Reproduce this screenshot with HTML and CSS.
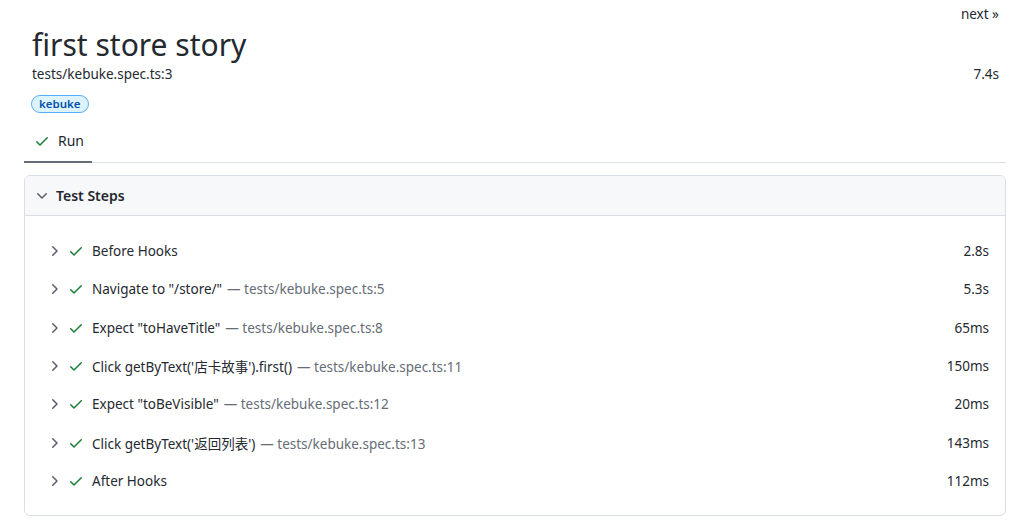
FILE: index.html
```html
<!DOCTYPE html>
<html lang="en">
<head>
    <meta charset="UTF-8">
    <title>Playwright Test Report</title>
    <link rel="stylesheet" href="styles.css">
</head>
<body>
    <div class="test-case">
        <div class="nav-row">
            <a class="nav-link" href="#">next »</a>
        </div>

        <h1 class="test-title">first store story</h1>
        <div class="location-row">
            <span>tests/kebuke.spec.ts:3</span>
            <span class="duration">7.4s</span>
        </div>

        <div class="labels">
            <span class="label">kebuke</span>
        </div>

        <div class="tabs">
            <div class="tab selected">
                <svg class="icon check" viewBox="0 0 16 16"><path d="M13.78 4.22a.75.75 0 0 1 0 1.06l-7.25 7.25a.75.75 0 0 1-1.06 0L2.22 9.28a.751.751 0 0 1 1.06-1.06L6 10.94l6.72-6.72a.75.75 0 0 1 1.06 0Z"/></svg>
                <span>Run</span>
            </div>
        </div>

        <div class="chip">
            <div class="chip-header">
                <svg class="icon chevron" viewBox="0 0 16 16"><path d="M12.78 5.22a.749.749 0 0 1 0 1.060l-4.25 4.25a.749.749 0 0 1-1.06 0L3.22 6.28a.749.749 0 1 1 1.06-1.06L8 8.939l3.72-3.719a.749.749 0 0 1 1.06 0Z"/></svg>
                <span>Test Steps</span>
            </div>
            <div class="chip-body">
                <div class="step">
                    <svg class="icon chevron" viewBox="0 0 16 16"><path d="M6.22 3.22a.75.75 0 0 1 1.06 0l4.25 4.25a.75.75 0 0 1 0 1.06l-4.25 4.25a.751.751 0 0 1-1.042-.018.751.751 0 0 1-.018-1.042L9.94 8 6.220 4.28a.75.75 0 0 1 0-1.06Z"/></svg>
                    <svg class="icon check" viewBox="0 0 16 16"><path d="M13.78 4.22a.75.75 0 0 1 0 1.06l-7.25 7.25a.75.75 0 0 1-1.06 0L2.22 9.28a.751.751 0 0 1 1.06-1.06L6 10.94l6.72-6.72a.75.75 0 0 1 1.06 0Z"/></svg>
                    <span class="step-title">Before Hooks</span>
                    <span class="step-duration">2.8s</span>
                </div>
                <div class="step">
                    <svg class="icon chevron" viewBox="0 0 16 16"><path d="M6.22 3.22a.75.75 0 0 1 1.06 0l4.25 4.25a.75.75 0 0 1 0 1.06l-4.25 4.25a.751.751 0 0 1-1.042-.018.751.751 0 0 1-.018-1.042L9.94 8 6.220 4.28a.75.75 0 0 1 0-1.06Z"/></svg>
                    <svg class="icon check" viewBox="0 0 16 16"><path d="M13.78 4.22a.75.75 0 0 1 0 1.06l-7.25 7.25a.75.75 0 0 1-1.06 0L2.22 9.28a.751.751 0 0 1 1.06-1.06L6 10.94l6.72-6.72a.75.75 0 0 1 1.06 0Z"/></svg>
                    <span class="step-title">Navigate to "/store/"<span class="step-location">— tests/kebuke.spec.ts:5</span></span>
                    <span class="step-duration">5.3s</span>
                </div>
                <div class="step">
                    <svg class="icon chevron" viewBox="0 0 16 16"><path d="M6.22 3.22a.75.75 0 0 1 1.06 0l4.25 4.25a.75.75 0 0 1 0 1.06l-4.25 4.25a.751.751 0 0 1-1.042-.018.751.751 0 0 1-.018-1.042L9.94 8 6.220 4.28a.75.75 0 0 1 0-1.06Z"/></svg>
                    <svg class="icon check" viewBox="0 0 16 16"><path d="M13.78 4.22a.75.75 0 0 1 0 1.06l-7.25 7.25a.75.75 0 0 1-1.06 0L2.22 9.28a.751.751 0 0 1 1.06-1.06L6 10.94l6.72-6.72a.75.75 0 0 1 1.06 0Z"/></svg>
                    <span class="step-title">Expect "toHaveTitle"<span class="step-location">— tests/kebuke.spec.ts:8</span></span>
                    <span class="step-duration">65ms</span>
                </div>
                <div class="step">
                    <svg class="icon chevron" viewBox="0 0 16 16"><path d="M6.22 3.22a.75.75 0 0 1 1.06 0l4.25 4.25a.75.75 0 0 1 0 1.06l-4.25 4.25a.751.751 0 0 1-1.042-.018.751.751 0 0 1-.018-1.042L9.94 8 6.220 4.28a.75.75 0 0 1 0-1.06Z"/></svg>
                    <svg class="icon check" viewBox="0 0 16 16"><path d="M13.78 4.22a.75.75 0 0 1 0 1.06l-7.25 7.25a.75.75 0 0 1-1.06 0L2.22 9.28a.751.751 0 0 1 1.06-1.06L6 10.94l6.72-6.72a.75.75 0 0 1 1.06 0Z"/></svg>
                    <span class="step-title">Click getByText('店卡故事').first()<span class="step-location">— tests/kebuke.spec.ts:11</span></span>
                    <span class="step-duration">150ms</span>
                </div>
                <div class="step">
                    <svg class="icon chevron" viewBox="0 0 16 16"><path d="M6.22 3.22a.75.75 0 0 1 1.06 0l4.25 4.25a.75.75 0 0 1 0 1.06l-4.25 4.25a.751.751 0 0 1-1.042-.018.751.751 0 0 1-.018-1.042L9.94 8 6.220 4.28a.75.75 0 0 1 0-1.06Z"/></svg>
                    <svg class="icon check" viewBox="0 0 16 16"><path d="M13.78 4.22a.75.75 0 0 1 0 1.06l-7.25 7.25a.75.75 0 0 1-1.06 0L2.22 9.28a.751.751 0 0 1 1.06-1.06L6 10.94l6.72-6.72a.75.75 0 0 1 1.06 0Z"/></svg>
                    <span class="step-title">Expect "toBeVisible"<span class="step-location">— tests/kebuke.spec.ts:12</span></span>
                    <span class="step-duration">20ms</span>
                </div>
                <div class="step">
                    <svg class="icon chevron" viewBox="0 0 16 16"><path d="M6.22 3.22a.75.75 0 0 1 1.06 0l4.25 4.25a.75.75 0 0 1 0 1.06l-4.25 4.25a.751.751 0 0 1-1.042-.018.751.751 0 0 1-.018-1.042L9.94 8 6.220 4.28a.75.75 0 0 1 0-1.06Z"/></svg>
                    <svg class="icon check" viewBox="0 0 16 16"><path d="M13.78 4.22a.75.75 0 0 1 0 1.06l-7.25 7.25a.75.75 0 0 1-1.06 0L2.22 9.28a.751.751 0 0 1 1.06-1.06L6 10.94l6.72-6.72a.75.75 0 0 1 1.06 0Z"/></svg>
                    <span class="step-title">Click getByText('返回列表')<span class="step-location">— tests/kebuke.spec.ts:13</span></span>
                    <span class="step-duration">143ms</span>
                </div>
                <div class="step">
                    <svg class="icon chevron" viewBox="0 0 16 16"><path d="M6.22 3.22a.75.75 0 0 1 1.06 0l4.25 4.25a.75.75 0 0 1 0 1.06l-4.25 4.25a.751.751 0 0 1-1.042-.018.751.751 0 0 1-.018-1.042L9.94 8 6.220 4.28a.75.75 0 0 1 0-1.06Z"/></svg>
                    <svg class="icon check" viewBox="0 0 16 16"><path d="M13.78 4.22a.75.75 0 0 1 0 1.06l-7.25 7.25a.75.75 0 0 1-1.06 0L2.22 9.28a.751.751 0 0 1 1.06-1.06L6 10.94l6.72-6.72a.75.75 0 0 1 1.06 0Z"/></svg>
                    <span class="step-title">After Hooks</span>
                    <span class="step-duration">112ms</span>
                </div>
            </div>
        </div>
    </div>
</body>
</html>
```

FILE: styles.css
```css
body {
    margin: 0;
    font-family: "Noto Sans", "Noto Sans CJK SC", sans-serif;
    font-size: 13.5px;
    color: #24292f;
    background: white;
}

.test-case {
    margin: 0 18px 0 24px;
}

.nav-row {
    display: flex;
    justify-content: flex-end;
    padding: 5px 7px 0 0;
    height: 18px;
}

.nav-link {
    color: #24292f;
    text-decoration: none;
    line-height: 18px;
}

.test-title {
    margin: 3px 0 0 8px;
    font-size: 30px;
    font-weight: 400;
    line-height: 38px;
}

.location-row {
    display: flex;
    justify-content: space-between;
    padding: 0 7px 0 8px;
    line-height: 20px;
}

.labels {
    display: flex;
    padding: 11px 0 0 7px;
}

.label {
    display: inline-block;
    padding: 0 7px;
    line-height: 16px;
    font-size: 11.5px;
    font-weight: 600;
    color: #0550ae;
    background: #ddf4ff;
    border: 1px solid #54aeff;
    border-radius: 9px;
}

.tabs {
    display: flex;
    margin-top: 11px;
    border-bottom: 1px solid #d8dee4;
}

.tab {
    display: flex;
    align-items: center;
    gap: 8px;
    padding: 0 8px 4px 10px;
    height: 33px;
    margin-bottom: -1px;
    font-size: 14px;
}

.tab.selected {
    border-bottom: 2px solid #656d76;
}

.icon {
    width: 16px;
    height: 16px;
    flex: none;
}

.check {
    fill: #1a7f37;
}

.chevron {
    fill: #57606a;
}

.chip {
    margin-top: 12px;
    border: 1px solid #d8dee4;
    border-radius: 6px;
    overflow: hidden;
}

.chip-header {
    display: flex;
    align-items: center;
    gap: 6px;
    height: 39px;
    padding: 0 9px;
    background: #f6f8fa;
    border-bottom: 1px solid #d8dee4;
    font-size: 14px;
    font-weight: 600;
}

.chip-body {
    padding: 16px 0 15px;
}

.step {
    display: flex;
    align-items: center;
    height: 38.3px;
    padding: 0 16px 0 21px;
}

.step .chevron {
    margin-right: 6px;
}

.step .check {
    margin-right: 8px;
}

.step-title {
    flex: 1;
    white-space: nowrap;
}

.step-location {
    color: #656d76;
    margin-left: 5px;
}
```
